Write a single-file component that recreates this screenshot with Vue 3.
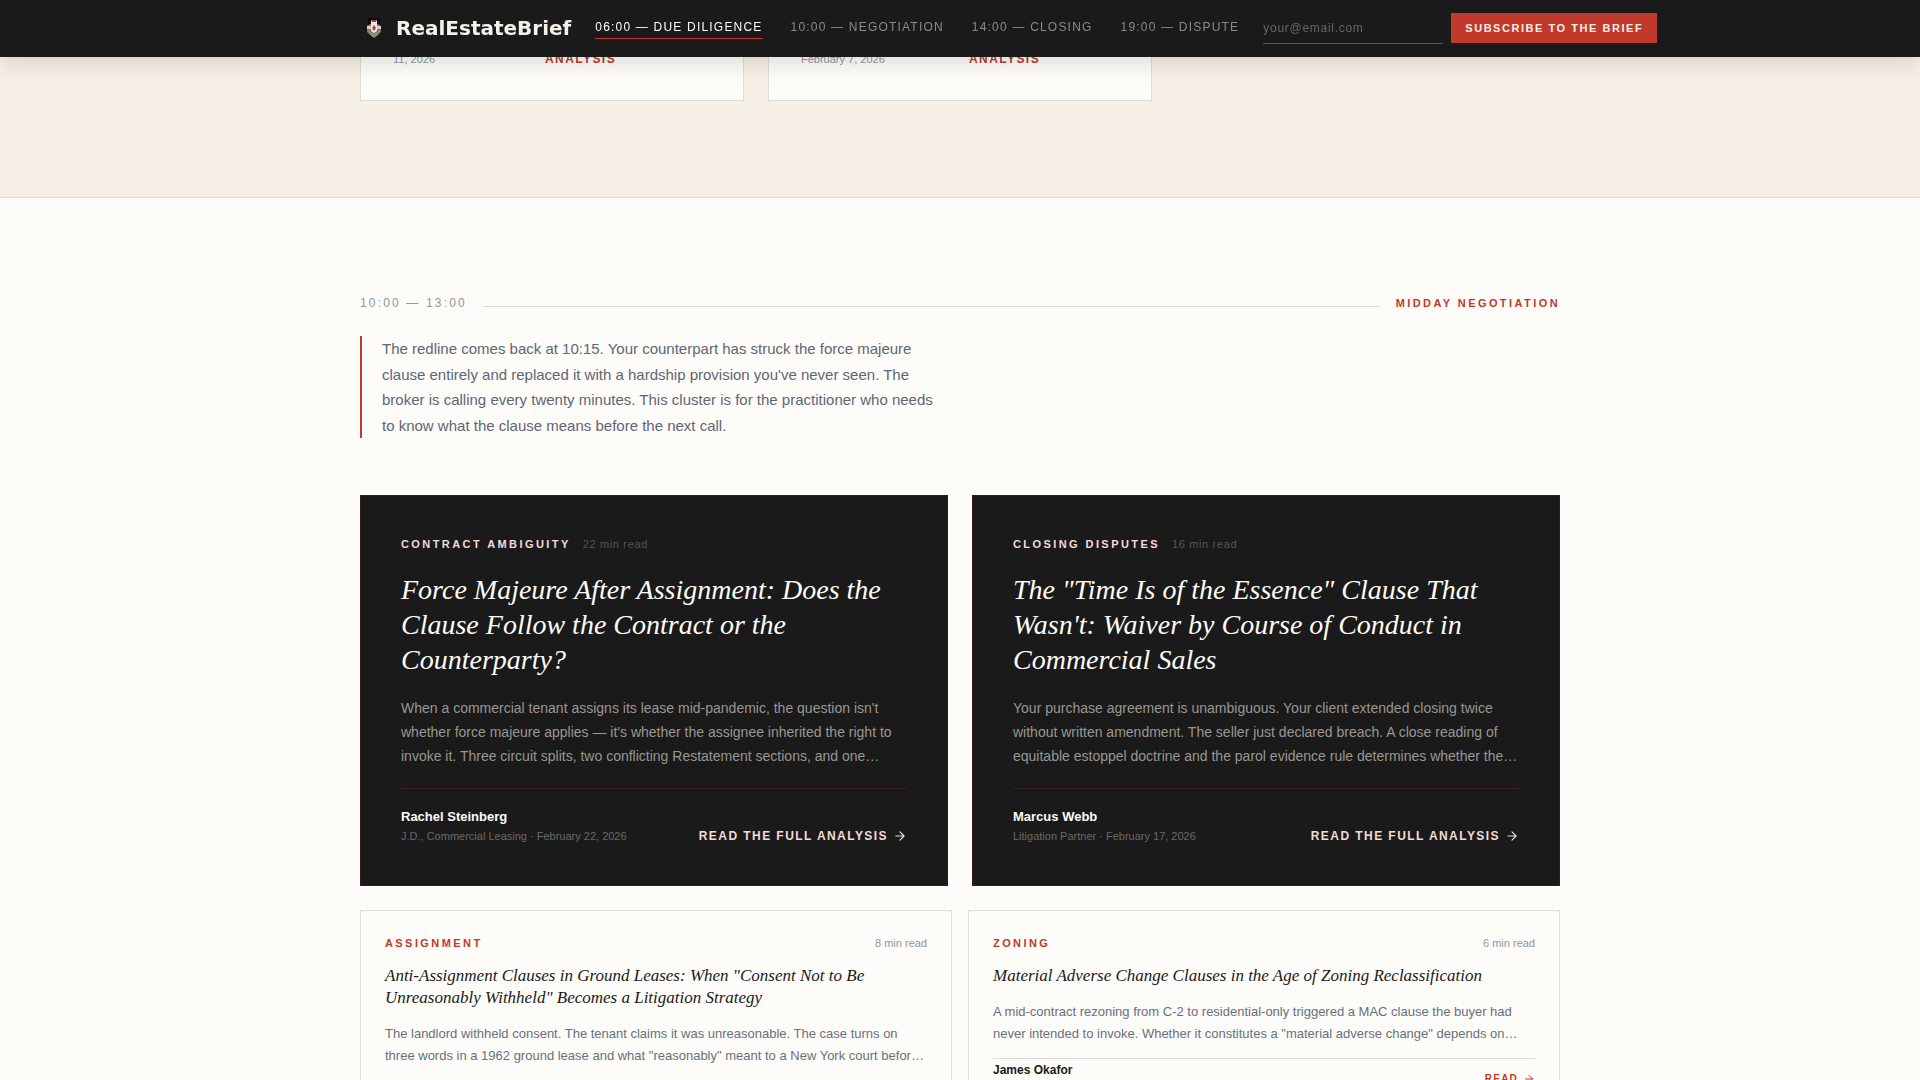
<script setup>
import { ref } from 'vue'

const email = ref('')

const navLinks = [
  { label: '06:00 — DUE DILIGENCE', href: '#due-diligence', active: true },
  { label: '10:00 — NEGOTIATION', href: '#negotiation' },
  { label: '14:00 — CLOSING', href: '#closing' },
  { label: '19:00 — DISPUTE', href: '#dispute' }
]

const earlierCards = [
  { date: '11, 2026', dateWidth: 152 },
  { date: 'February 7, 2026', dateWidth: 168 }
]

const features = [
  {
    category: 'CONTRACT AMBIGUITY',
    time: '22 min read',
    title: 'Force Majeure After Assignment: Does the Clause Follow the Contract or the Counterparty?',
    excerpt: "When a commercial tenant assigns its lease mid-pandemic, the question isn't whether force majeure applies — it's whether the assignee inherited the right to invoke it. Three circuit splits, two conflicting Restatement sections, and one…",
    author: 'Rachel Steinberg',
    meta: 'J.D., Commercial Leasing · February 22, 2026'
  },
  {
    category: 'CLOSING DISPUTES',
    time: '16 min read',
    title: 'The "Time Is of the Essence" Clause That Wasn\'t: Waiver by Course of Conduct in Commercial Sales',
    excerpt: 'Your purchase agreement is unambiguous. Your client extended closing twice without written amendment. The seller just declared breach. A close reading of equitable estoppel doctrine and the parol evidence rule determines whether the…',
    author: 'Marcus Webb',
    meta: 'Litigation Partner · February 17, 2026'
  }
]

const briefs = [
  {
    category: 'ASSIGNMENT',
    time: '8 min read',
    title: 'Anti-Assignment Clauses in Ground Leases: When "Consent Not to Be Unreasonably Withheld" Becomes a Litigation Strategy',
    excerpt: 'The landlord withheld consent. The tenant claims it was unreasonable. The case turns on three words in a 1962 ground lease and what "reasonably" meant to a New York court befor…'
  },
  {
    category: 'ZONING',
    time: '6 min read',
    title: 'Material Adverse Change Clauses in the Age of Zoning Reclassification',
    excerpt: 'A mid-contract rezoning from C-2 to residential-only triggered a MAC clause the buyer had never intended to invoke. Whether it constitutes a "material adverse change" depends on…',
    author: 'James Okafor'
  }
]
</script>

<template>
  <div class="page">
    <header class="topbar">
      <div class="container topbar-inner">
        <a class="brand" href="#top">
          <svg class="brand-mark" viewBox="0 0 28 28" aria-hidden="true">
            <path d="M8 4h12v7H8z" fill="#0c0b0b" />
            <path d="M7 12l3-2h8l3 2v6l-3 3-4 3-4-3-3-3z" fill="#77756a" />
            <path d="M7 12h14v3H7z" fill="#d8cfc4" />
            <path d="M8 17l6 4 6-4M10 20l4 3 4-3" fill="none" stroke="#a3a195" />
            <path d="M11 7l1-1h4l1 1v10l-3 2-3-2z" fill="#f0e6e1" />
            <path d="M12 6h4v2h-4z" fill="#a63a3c" />
            <path d="M14 11l2 3-2 3-2-3z" fill="#c2383a" />
            <path d="M10 10h1v2h-1zM17 10h1v2h-1z" fill="#77756a" />
          </svg>
          <span>RealEstateBrief</span>
        </a>
        <nav class="nav" aria-label="Sections">
          <a
            v-for="link in navLinks"
            :key="link.href"
            :href="link.href"
            :class="['nav-link', { active: link.active }]"
          >{{ link.label }}</a>
        </nav>
        <form class="subscribe" @submit.prevent>
          <input v-model="email" class="email" type="email" placeholder="your@email.com" aria-label="Email address" />
          <button class="subscribe-button" type="submit">SUBSCRIBE TO THE BRIEF</button>
        </form>
      </div>
    </header>

    <main>
      <section id="due-diligence" class="morning">
        <div class="container morning-grid">
          <article v-for="card in earlierCards" :key="card.date" class="morning-card">
            <span class="morning-date" :style="{ width: card.dateWidth + 'px' }">{{ card.date }}</span>
            <a class="morning-link" href="#due-diligence">ANALYSIS</a>
          </article>
        </div>
      </section>

      <section id="negotiation" class="midday">
        <div class="container">
          <div class="section-head">
            <span class="section-time">10:00 — 13:00</span>
            <span class="section-rule"></span>
            <h2 class="section-name">MIDDAY NEGOTIATION</h2>
          </div>
          <p class="section-intro">
            The redline comes back at 10:15. Your counterpart has struck the force majeure clause entirely
            and replaced it with a hardship provision you've never seen. The broker is calling every twenty
            minutes. This cluster is for the practitioner who needs to know what the clause means before the
            next call.
          </p>

          <div class="feature-grid">
            <article v-for="item in features" :key="item.category" class="feature">
              <div class="feature-top">
                <span class="category">{{ item.category }}</span>
                <span class="feature-time">{{ item.time }}</span>
              </div>
              <h3 class="feature-title">{{ item.title }}</h3>
              <p class="feature-excerpt">{{ item.excerpt }}</p>
              <footer class="feature-foot">
                <div>
                  <div class="feature-author">{{ item.author }}</div>
                  <div class="feature-meta">{{ item.meta }}</div>
                </div>
                <a class="feature-link" href="#negotiation">
                  READ THE FULL ANALYSIS
                  <svg class="arrow" viewBox="0 0 24 24" aria-hidden="true"><path d="M5 12h14M12 5l7 7-7 7" /></svg>
                </a>
              </footer>
            </article>
          </div>

          <div class="brief-grid">
            <article v-for="item in briefs" :key="item.category" class="brief">
              <div class="brief-top">
                <span class="category">{{ item.category }}</span>
                <span class="brief-time">{{ item.time }}</span>
              </div>
              <h3 class="brief-title">{{ item.title }}</h3>
              <p class="brief-excerpt">{{ item.excerpt }}</p>
              <footer v-if="item.author" class="brief-foot">
                <span class="brief-author">{{ item.author }}</span>
                <a class="brief-link" href="#negotiation">
                  READ
                  <svg class="arrow arrow-small" viewBox="0 0 24 24" aria-hidden="true"><path d="M5 12h14M12 5l7 7-7 7" /></svg>
                </a>
              </footer>
            </article>
          </div>
        </div>
      </section>
    </main>
  </div>
</template>

<style>
body {
  margin: 0;
  background: #fdfcf8;
}
</style>

<style scoped>
.page {
  height: 100vh;
  overflow: hidden;
  background: #fdfcf8;
  color: #1a1a1a;
  font-family: "Liberation Sans", Arial, sans-serif;
}

.page *,
.page *::before {
  box-sizing: border-box;
}

a {
  text-decoration: none;
}

h2,
h3,
p {
  margin: 0;
}

.container {
  max-width: 1200px;
  margin: 0 auto;
}

.topbar {
  position: fixed;
  top: 0;
  left: 0;
  right: 0;
  z-index: 10;
  background: #1a1a1a;
  box-shadow: 0 4px 24px rgba(0, 0, 0, 0.15);
}

.topbar-inner {
  display: flex;
  align-items: center;
  gap: 24px;
  height: 57px;
  white-space: nowrap;
}

.brand {
  display: flex;
  flex-shrink: 0;
  align-items: center;
  gap: 8px;
  padding-bottom: 1px;
  color: #f5f0ea;
  font: bold 20px/24px "DejaVu Sans", sans-serif;
}

.brand-mark {
  width: 28px;
  height: 28px;
}

.nav {
  display: flex;
  flex-shrink: 0;
  gap: 28px;
}

.nav-link {
  padding-bottom: 2px;
  border-bottom: 1px solid transparent;
  color: #8b8a88;
  font-size: 12px;
  line-height: 18px;
  letter-spacing: 0.1em;
}

.nav-link.active {
  border-color: #c0392b;
  color: #fdfcf8;
}

.subscribe {
  display: flex;
  flex-shrink: 0;
  align-items: flex-start;
  gap: 8px;
}

.email {
  width: 180px;
  height: 31px;
  padding: 0;
  border: 0;
  border-bottom: 1px solid #555;
  border-radius: 0;
  outline: 0;
  background: transparent;
  color: #fdfcf8;
  font: 12px "Liberation Sans", Arial, sans-serif;
  letter-spacing: 0.06em;
}

.email::placeholder {
  color: #666;
}

.subscribe-button {
  height: 30px;
  padding: 0 14px;
  border: 0;
  background: #c0392b;
  color: #fbeee8;
  font: bold 11px "Liberation Sans", Arial, sans-serif;
  letter-spacing: 0.14em;
}

.morning {
  padding-bottom: 96px;
  border-bottom: 1px solid #dcdcd8;
  background: #f5efe8;
}

.morning-grid {
  display: grid;
  grid-template-columns: repeat(3, 1fr);
  gap: 24px;
}

.morning-card {
  display: flex;
  align-items: baseline;
  padding: 50px 32px 32px;
  border: 1px solid #dcdcd8;
  border-top: 0;
  background: #fdfcf8;
}

.morning-date {
  color: #8e96a3;
  font-size: 11px;
  line-height: 18px;
}

.morning-link {
  color: #c0392b;
  font-size: 12px;
  font-weight: bold;
  line-height: 18px;
  letter-spacing: 0.12em;
}

.midday {
  padding: 96px 0;
}

.section-head {
  display: flex;
  align-items: baseline;
  gap: 16px;
  margin-bottom: 24px;
}

.section-time {
  color: #8e96a3;
  font-size: 12px;
  line-height: 18px;
  letter-spacing: 0.18em;
}

.section-rule {
  flex: 1;
  height: 1px;
  background: #dcdcd8;
}

.section-name {
  color: #c0392b;
  font-size: 11px;
  line-height: 16px;
  letter-spacing: 0.22em;
}

.section-intro {
  max-width: 580px;
  margin-bottom: 57px;
  padding-left: 20px;
  border-left: 2px solid #c0392b;
  color: #5f6675;
  font-size: 15px;
  line-height: 1.7;
}

.feature-grid {
  display: grid;
  grid-template-columns: 1fr 1fr;
  gap: 24px;
  margin-bottom: 24px;
}

.feature {
  padding: 40px;
  border: 1px solid #321d1d;
  background: #1a1a1a;
}

.category {
  color: #c0392b;
  font-size: 11px;
  font-weight: bold;
  line-height: 16px;
  letter-spacing: 0.22em;
}

.feature-top {
  display: flex;
  align-items: center;
  gap: 12px;
  margin-bottom: 20px;
}

.feature-top .category {
  color: #f2dcd8;
}

.feature-time {
  color: #555;
  font-size: 11px;
  line-height: 16px;
  letter-spacing: 0.06em;
}

.feature-title {
  margin-bottom: 20px;
  color: #fdfcf8;
  font: italic 28px/35px "Liberation Serif", "Times New Roman", serif;
}

.feature-excerpt {
  margin-bottom: 20px;
  color: #999792;
  font-size: 14px;
  line-height: 1.7;
}

.feature-foot {
  display: flex;
  align-items: flex-end;
  justify-content: space-between;
  padding-top: 18px;
  border-top: 1px solid #3a1f1f;
}

.feature-author {
  margin-bottom: 1px;
  color: #fdfcf8;
  font-size: 13px;
  font-weight: bold;
  line-height: 20px;
}

.feature-meta {
  color: #6a6967;
  font-size: 11px;
  line-height: 17px;
}

.feature-link {
  display: flex;
  align-items: center;
  gap: 5px;
  color: #f2dcd8;
  font-size: 12px;
  font-weight: bold;
  line-height: 18px;
  letter-spacing: 0.12em;
}

.arrow {
  width: 14px;
  height: 14px;
  fill: none;
  stroke: currentColor;
  stroke-width: 2;
  stroke-linecap: round;
  stroke-linejoin: round;
}

.arrow-small {
  width: 12px;
  height: 12px;
}

.brief-grid {
  display: grid;
  grid-template-columns: 1fr 1fr;
  gap: 16px;
}

.brief {
  padding: 24px;
  border: 1px solid #dcdcd8;
}

.brief-top {
  display: flex;
  justify-content: space-between;
  margin-bottom: 14px;
}

.brief-time {
  color: #8e96a3;
  font-size: 11px;
  line-height: 16px;
}

.brief-title {
  margin-bottom: 14px;
  color: #1a1a1a;
  font: italic 17px/22px "Liberation Serif", "Times New Roman", serif;
}

.brief-excerpt {
  margin-bottom: 13px;
  color: #67707e;
  font-size: 13px;
  line-height: 22px;
}

.brief-foot {
  display: flex;
  justify-content: space-between;
  padding-top: 2px;
  border-top: 1px solid #dcdcd8;
}

.brief-author {
  font-size: 12px;
  font-weight: bold;
  line-height: 18px;
}

.brief-link {
  display: flex;
  align-items: center;
  gap: 5px;
  color: #c0392b;
  font-size: 10px;
  font-weight: bold;
  line-height: 35px;
  letter-spacing: 0.12em;
}
</style>
